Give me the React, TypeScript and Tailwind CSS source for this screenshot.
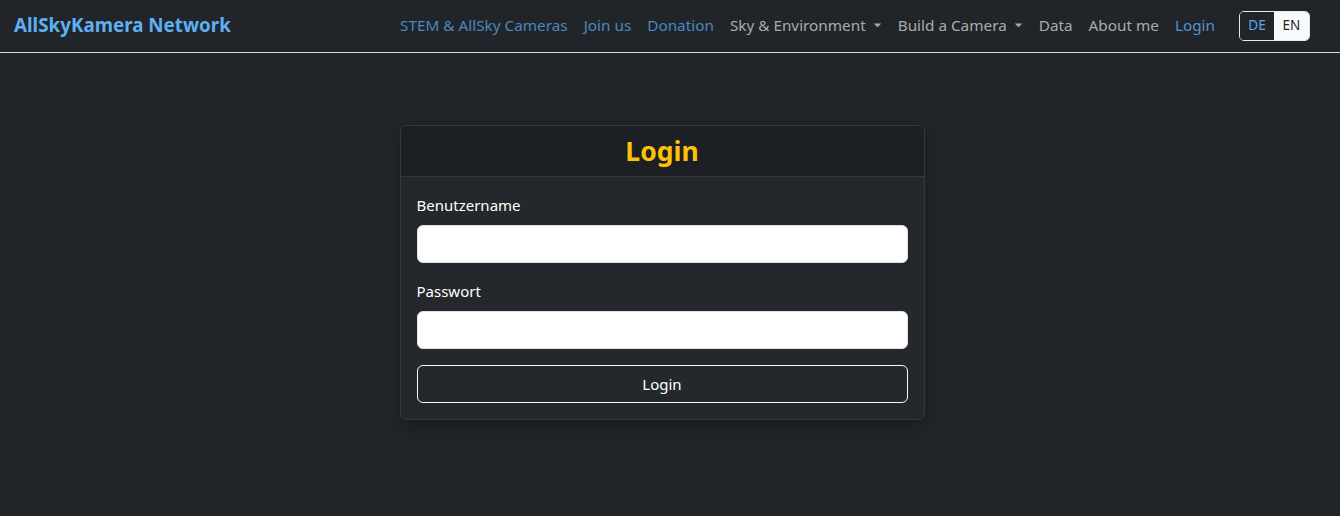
const navLinks = [
  { label: "STEM & AllSky Cameras", tone: "blue" },
  { label: "Join us", tone: "blue" },
  { label: "Donation", tone: "blue" },
  { label: "Sky & Environment", tone: "gray", dropdown: true },
  { label: "Build a Camera", tone: "gray", dropdown: true },
  { label: "Data", tone: "gray" },
  { label: "About me", tone: "gray" },
  { label: "Login", tone: "login" },
];

const Caret = () => (
  <svg width="9" height="5" viewBox="0 0 10 6" className="ml-[7px] mt-[1px]">
    <path d="M0.5 0.5 L5 5 L9.5 0.5 Z" fill="currentColor" />
  </svg>
);

const Navbar = () => {
  return (
    <nav className="flex h-[53px] items-center border-b border-[#dcdcdc] pb-[2px] pl-[14px] pr-[30px]">
      <a className="text-[18.8px] font-bold text-[#5eb0f3]">AllSkyKamera Network</a>
      <ul className="ml-auto flex items-center">
        {navLinks.map((link) => (
          <li
            key={link.label}
            className={
              "flex items-center px-[8px] text-[15.3px] " +
              (link.tone === "blue"
                ? "text-[#4a88bd]"
                : link.tone === "login"
                  ? "text-[#5193c9]"
                  : "text-[#a8abae]")
            }
          >
            {link.label}
            {link.dropdown && <Caret />}
          </li>
        ))}
      </ul>
      <div className="ml-[16px] mt-[1px] flex h-[30px] overflow-hidden rounded-[5px] border border-[#e8e9ea] text-[13.5px]">
        <button className="w-[34px] bg-[#212529] text-[#5aa5ea]">DE</button>
        <button className="w-[35px] bg-[#f8f9fa] text-[#212529]">EN</button>
      </div>
    </nav>
  );
};

export default function App() {
  return (
    <div
      className="min-h-[516px] bg-[#212529] text-white"
      style={{ fontFamily: '"Segoe UI", "Noto Sans", sans-serif' }}
    >
      <Navbar />
      <main className="flex justify-center pr-[16px] pt-[72px]">
        <div className="w-[525px] overflow-hidden rounded-[6px] border border-[#35383c] bg-[#24272b] shadow-[0_6px_16px_rgba(0,0,0,0.25)]">
          <div className="flex h-[51px] items-center justify-center border-b border-[#35383c] bg-[#1c1f23]">
            <h3 className="text-[26.5px] font-bold leading-none text-[#ffc107]">Login</h3>
          </div>
          <form className="p-[16px]">
            <label className="mb-[8px] block text-[15px] leading-[24px]">Benutzername</label>
            <input
              type="text"
              className="mb-[16px] block h-[38px] w-full rounded-[6px] border border-[#dee2e6] bg-white px-3"
            />
            <label className="mb-[8px] block text-[15px] leading-[24px]">Passwort</label>
            <input
              type="password"
              className="mb-[16px] block h-[38px] w-full rounded-[6px] border border-[#dee2e6] bg-white px-3"
            />
            <button
              type="button"
              className="block h-[38px] w-full rounded-[6px] border border-[#f8f9fa] text-[15px] text-white"
            >
              Login
            </button>
          </form>
        </div>
      </main>
    </div>
  );
}
